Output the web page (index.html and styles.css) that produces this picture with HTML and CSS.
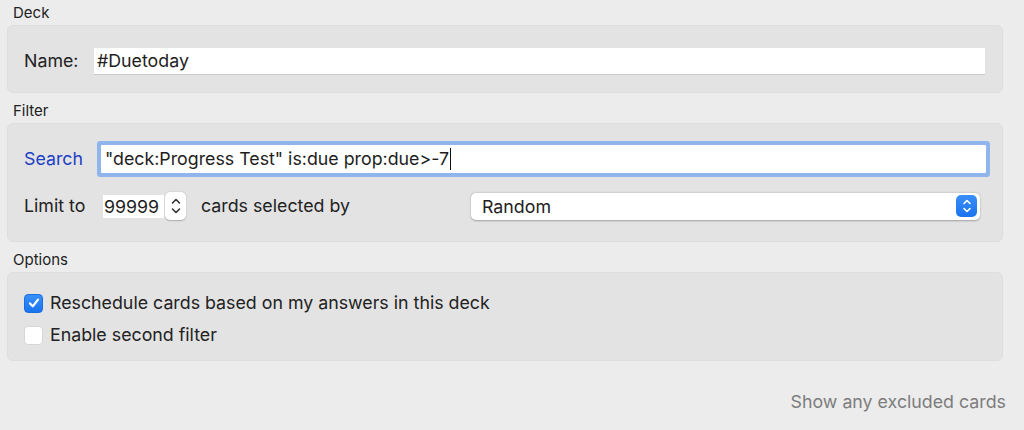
FILE: index.html
```html
<!DOCTYPE html>
<html>
<head>
<meta charset="utf-8">
<link rel="stylesheet" href="styles.css">
</head>
<body>
<div class="dialog">
  <div class="group-title">Deck</div>
  <div class="group deck-group">
    <div class="row">
      <span class="label name-label">Name:</span>
      <div class="field name-field">#Duetoday</div>
    </div>
  </div>

  <div class="group-title">Filter</div>
  <div class="group filter-group">
    <div class="row">
      <span class="label search-label">Search</span>
      <div class="field search-field">"deck:Progress Test" is:due prop:due&gt;-7<span class="caret"></span></div>
    </div>
    <div class="row limit-row">
      <span class="label limit-label">Limit to</span>
      <div class="field num-field">99999</div>
      <div class="stepper">
        <svg width="12" height="22" viewBox="0 0 12 22"><path d="M2.5 8 L6 4.5 L9.5 8" fill="none" stroke="#333" stroke-width="1.6" stroke-linecap="round" stroke-linejoin="round"/><path d="M2.5 14 L6 17.5 L9.5 14" fill="none" stroke="#333" stroke-width="1.6" stroke-linecap="round" stroke-linejoin="round"/></svg>
      </div>
      <span class="label cards-label">cards selected by</span>
      <div class="select">
        <span class="select-text">Random</span>
        <span class="select-btn">
          <svg width="12" height="18" viewBox="0 0 12 18"><path d="M3 6.5 L6 3.5 L9 6.5" fill="none" stroke="#fff" stroke-width="1.6" stroke-linecap="round" stroke-linejoin="round"/><path d="M3 11.5 L6 14.5 L9 11.5" fill="none" stroke="#fff" stroke-width="1.6" stroke-linecap="round" stroke-linejoin="round"/></svg>
        </span>
      </div>
    </div>
  </div>

  <div class="group-title">Options</div>
  <div class="group options-group">
    <label class="check-row">
      <span class="checkbox checked">
        <svg width="14" height="14" viewBox="0 0 14 14"><path d="M3 7.4 L5.8 10.3 L11 3.6" fill="none" stroke="#fff" stroke-width="2.2" stroke-linecap="round" stroke-linejoin="round"/></svg>
      </span>
      <span class="check-text">Reschedule cards based on my answers in this deck</span>
    </label>
    <label class="check-row">
      <span class="checkbox"></span>
      <span class="check-text">Enable second filter</span>
    </label>
  </div>

  <div class="footer">
    <span class="excluded">Show any excluded cards</span>
  </div>
</div>
</body>
</html>
```

FILE: styles.css
```css
html, body {
  margin: 0;
  padding: 0;
  background: #ececec;
}

body {
  font-family: Inter, "Noto Sans", "Liberation Sans", sans-serif;
  color: #222;
  width: 1024px;
  height: 430px;
  overflow: hidden;
}

.dialog {
  padding: 0 21px 0 7px;
}

.group-title {
  height: 25px;
  box-sizing: border-box;
  padding: 3px 0 0 6px;
  font-size: 15px;
  line-height: 20px;
  color: #222;
}

.group {
  background: #e3e3e3;
  border: 1px solid #dedede;
  border-radius: 6px;
  margin-bottom: 5px;
  box-sizing: border-box;
}

.row {
  display: flex;
  align-items: center;
}

.label {
  font-size: 17.8px;
  line-height: 22px;
  flex: none;
}

.field {
  background: #fff;
  font-size: 17.8px;
  line-height: 26px;
  height: 26px;
  box-sizing: border-box;
  padding: 0 6px;
  box-shadow: 0 1px 0 #c9c9c9;
  white-space: nowrap;
  color: #1e1e1e;
}

/* Deck */
.deck-group {
  height: 68px;
  padding: 22px 17px 0 16px;
}

.name-label {
  width: 70px;
}

.name-field {
  flex: 1;
  padding-left: 3px;
}

/* Filter */
.filter-group {
  height: 119px;
  padding: 21px 16px 0 16px;
}

.search-label {
  width: 77px;
  color: #1d3fc5;
}

.search-field {
  flex: 1;
  height: 28px;
  line-height: 28px;
  padding-left: 4px;
  box-shadow: 0 0 0 4px #90b5ec;
  border-radius: 1px;
}

.caret {
  display: inline-block;
  width: 1px;
  height: 22px;
  background: #111;
  vertical-align: middle;
  margin-left: 1px;
  position: relative;
  top: -1px;
}

.limit-row {
  margin-top: 19px;
  height: 28px;
}

.limit-label {
  width: 79px;
}

.num-field {
  width: 61px;
  height: 23px;
  line-height: 23px;
  padding: 0 0 0 1px;
  box-shadow: none;
}

.stepper {
  width: 21px;
  height: 28px;
  margin-left: 1px;
  background: #fff;
  border-radius: 5px;
  box-shadow: 0 0.5px 1.5px rgba(0,0,0,0.25);
  display: flex;
  align-items: center;
  justify-content: center;
}

.cards-label {
  margin-left: 15px;
  width: 270px;
}

.select {
  flex: 1;
  height: 27px;
  margin-right: 6px;
  background: #fff;
  border-radius: 5px;
  box-shadow: 0 0.5px 2px rgba(0,0,0,0.3);
  display: flex;
  align-items: center;
  justify-content: space-between;
  padding: 0 3px 0 11px;
}

.select-text {
  font-size: 17.8px;
  color: #222;
}

.select-btn {
  width: 21px;
  height: 22px;
  border-radius: 5px;
  background: linear-gradient(#3a8ff8, #1a73ef);
  display: flex;
  align-items: center;
  justify-content: center;
}

/* Options */
.options-group {
  height: 89px;
  padding: 20px 16px 0 16px;
}

.check-row {
  display: flex;
  align-items: center;
  height: 20px;
  margin-bottom: 12px;
}

.checkbox {
  width: 19px;
  height: 19px;
  box-sizing: border-box;
  border-radius: 4px;
  background: #fff;
  border: 1px solid #d6d6d6;
  margin-right: 7px;
  display: flex;
  align-items: center;
  justify-content: center;
  flex: none;
}

.checkbox.checked {
  background: linear-gradient(#3990f8, #1a74ef);
  border-color: #1a6ee0;
}

.check-text {
  font-size: 17.8px;
  line-height: 22px;
}

/* Footer */
.footer {
  display: flex;
  justify-content: flex-end;
  margin-top: 30px;
  margin-right: -3px;
}

.excluded {
  font-size: 17.8px;
  color: #7d7d7d;
  line-height: 22px;
}
```
